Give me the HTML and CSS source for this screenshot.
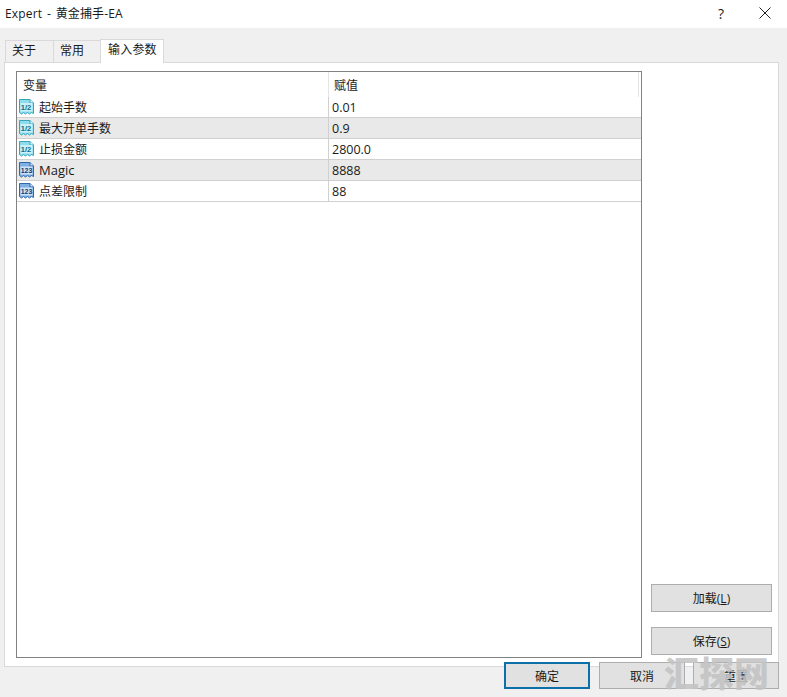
FILE: index.html
```html
<!DOCTYPE html>
<html lang="zh-CN">
<head>
<meta charset="utf-8">
<title>Expert - 黄金捕手-EA</title>
<link rel="stylesheet" href="styles.css">
</head>
<body>
<svg class="defs" width="0" height="0" aria-hidden="true">
  <symbol id="doc-dbl" viewBox="0 0 17 18">
    <path d="M1.5 1.5H12L15.5 5V15.5L13.5 14.5L11.5 16L9.5 14.5L7.5 16L5.5 14.5L3.5 16L1.5 14.5Z" fill="#8fdcea" stroke="#35a5bd"/>
    <path d="M12 1.5V5H15.5" fill="#e8fafc" stroke="#35a5bd"/>
    <rect x="2.5" y="5" width="12" height="8.5" fill="#c9f1f7"/>
    <text x="8" y="12" text-anchor="middle" class="icon-txt dbl">1/2</text>
  </symbol>
  <symbol id="doc-int" viewBox="0 0 17 18">
    <path d="M1.5 1.5H12L15.5 5V15.5L13.5 14.5L11.5 16L9.5 14.5L7.5 16L5.5 14.5L3.5 16L1.5 14.5Z" fill="#7fb0e4" stroke="#2f67ab"/>
    <path d="M12 1.5V5H15.5" fill="#d5e6f8" stroke="#2f67ab"/>
    <rect x="2.5" y="5.5" width="12" height="8" fill="#cfe2f7"/>
    <text x="8.5" y="12.3" text-anchor="middle" class="icon-txt int">123</text>
  </symbol>
</svg>
<header class="titlebar">
  <span class="title">Expert - 黄金捕手-EA</span>
  <span class="help">?</span>
  <svg class="close" width="12" height="12" viewBox="0 0 12 12"><path d="M.5.5L11.5 11.5M11.5.5L.5 11.5" stroke="#222" fill="none"/></svg>
</header>
<main class="dialog">
  <nav class="tabs">
    <span class="tab">关于</span>
    <span class="tab">常用</span>
    <span class="tab active">输入参数</span>
  </nav>
  <section class="panel">
    <div class="list">
      <div class="row head"><div class="c1">变量</div><div class="c2">赋值</div></div>
      <div class="row"><div class="c1"><svg class="ico"><use href="#doc-dbl"/></svg>起始手数</div><div class="c2">0.01</div></div>
      <div class="row alt"><div class="c1"><svg class="ico"><use href="#doc-dbl"/></svg>最大开单手数</div><div class="c2">0.9</div></div>
      <div class="row"><div class="c1"><svg class="ico"><use href="#doc-dbl"/></svg>止损金额</div><div class="c2">2800.0</div></div>
      <div class="row alt"><div class="c1 latin"><svg class="ico"><use href="#doc-int"/></svg>Magic</div><div class="c2">8888</div></div>
      <div class="row"><div class="c1"><svg class="ico"><use href="#doc-int"/></svg>点差限制</div><div class="c2">88</div></div>
    </div>
    <div class="side">
      <button class="btn side-btn">加载(<u>L</u>)</button>
      <button class="btn side-btn">保存(<u>S</u>)</button>
    </div>
  </section>
  <footer class="actions">
    <button class="btn foot-btn primary">确定</button>
    <button class="btn foot-btn">取消</button>
    <button class="btn foot-btn last">重置</button>
  </footer>
</main>
<div class="watermark">汇探网</div>
</body>
</html>
```
FILE: styles.css
```css
* { box-sizing: border-box; }
html, body { margin: 0; height: 697px; overflow: hidden; }
body {
  position: relative;
  width: 787px;
  background: #f0f0f0;
  font-family: "Open Sans", "Noto Sans CJK SC", sans-serif;
  font-size: 12px;
  color: #1a1a1a;
}
.defs { position: absolute; }
.icon-txt { font-family: "Liberation Sans", sans-serif; font-size: 7.5px; font-weight: 700; }
.icon-txt.dbl { fill: #14687f; }
.icon-txt.int { fill: #123c73; font-size: 7px; }

.titlebar {
  height: 28px;
  background: #fff;
  display: flex;
  align-items: center;
  padding: 0 16px 2px 5px;
}
.title { flex: 1; font-size: 12px; word-spacing: 1.5px; letter-spacing: .15px; }
.help { font-size: 14px; margin-right: 31px; width: 10px; }
.close { display: block; }

.dialog { padding: 10px 8px 0 4px; }
.tabs { display: flex; align-items: flex-end; height: 24px; padding-left: 1px; }
.tab {
  width: 48px;
  height: 22px;
  line-height: 20px;
  padding-left: 6px;
  background: #f0f0f0;
  border: 1px solid #d9d9d9;
  border-bottom: 0;
  margin-right: -1px;
  white-space: nowrap;
}
.tab:first-child { width: 49px; }
.tab.active {
  width: 64px;
  height: 24px;
  line-height: 20px;
  padding-left: 7px;
  letter-spacing: .2px;
  background: #fff;
  margin: 0 0 -1px 0;
  position: relative;
  z-index: 1;
}

.panel {
  height: 605px;
  background: #fff;
  border: 1px solid #d9d9d9;
  display: flex;
  padding: 8px 6px 8px 11px;
}
.list {
  width: 626px;
  flex: none;
  border: 1px solid #828282;
  background: #fff;
}
.row {
  display: flex;
  height: 21px;
  border-bottom: 1px solid #d0d0d0;
}
.row.head { height: 25px; border-bottom: 0; }
.row.alt { background: #e9e9e9; }
.c1, .c2 { display: flex; align-items: center; white-space: nowrap; }
.c1 { width: 312px; flex: none; padding-left: 1px; border-right: 1px solid #d0d0d0; }
.c1.latin { font-size: 13px; }
.c2 { flex: 1; padding-left: 3px; font-size: 12.5px; }
.head .c1 { padding-left: 6px; border-right-color: #e5e5e5; }
.head .c2 { padding-left: 5px; font-size: 12px; border-right: 1px solid #e5e5e5; margin-right: 2px; }
.ico { width: 17px; height: 18px; margin-right: 4px; flex: none; }

.side {
  flex: 1;
  display: flex;
  flex-direction: column;
  justify-content: flex-end;
  align-items: flex-end;
  gap: 15px;
  padding-bottom: 3px;
}
.btn {
  font: inherit;
  color: inherit;
  background: #e1e1e1;
  border: 1px solid #adadad;
  padding: 0;
}
.side-btn { width: 121px; height: 28px; flex: none; }

.actions {
  display: flex;
  justify-content: flex-end;
  gap: 9px;
  margin-top: -5px;
  position: relative;
}
.foot-btn { width: 86px; height: 27px; }
.foot-btn.last { margin-left: -1px; }
.foot-btn.primary { border: 2px solid #0d6fa8; }

.watermark {
  position: absolute;
  left: 664px;
  top: 650px;
  font-family: "Noto Sans CJK SC", sans-serif;
  font-size: 35px;
  line-height: 44px;
  font-weight: 900;
  color: rgba(195, 195, 195, 0.9);
  white-space: nowrap;
}
```
